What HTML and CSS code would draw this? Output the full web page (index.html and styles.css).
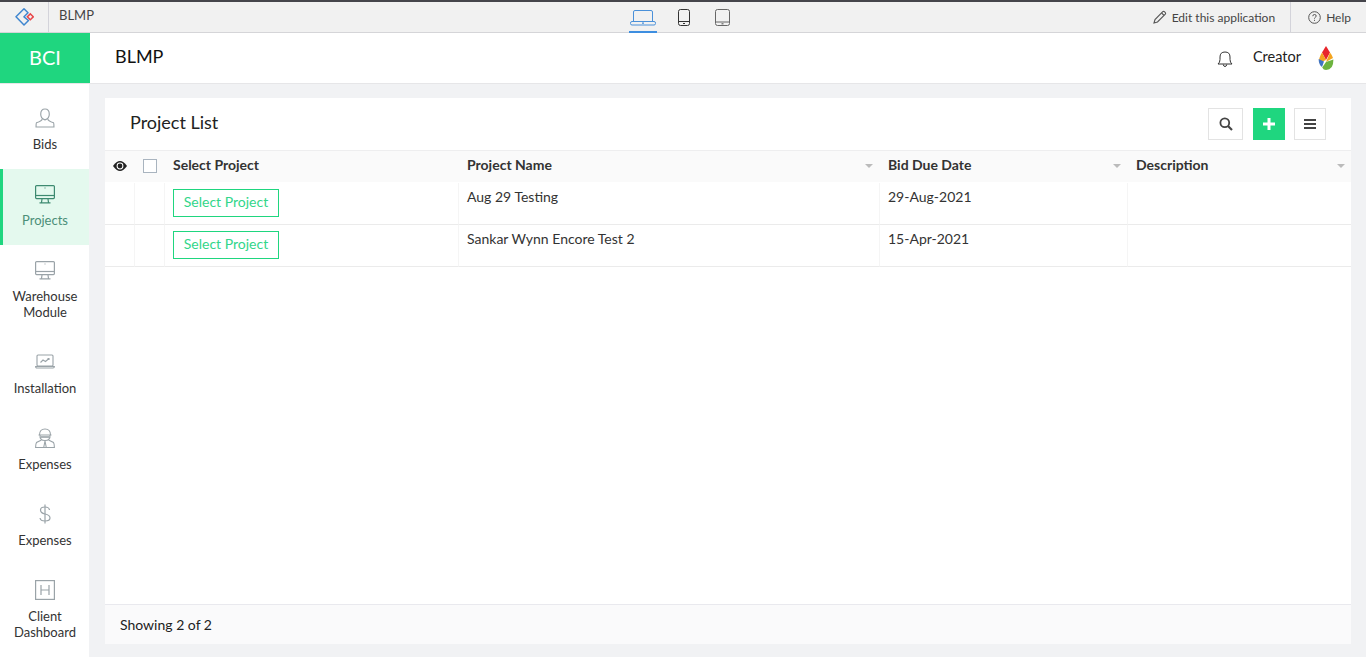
FILE: index.html
```html
<!DOCTYPE html>
<html lang="en">
<head>
    <meta charset="UTF-8">
    <meta name="viewport" content="width=device-width, initial-scale=1.0">
    <title>BLMP</title>
    <link rel="stylesheet" href="styles.css">
</head>
<body>
    <!-- Creator toolbar -->
    <div class="topbar">
        <div class="topbar-logo">
            <svg width="19" height="18" viewBox="0 0 19 18" fill="none">
                <path d="M9 0.8 L1 8.8 L9 17 L13.5 12.5 L9 8.8 L13 4.8 Z" stroke="#3f86cf" stroke-width="1.5" stroke-linejoin="round"/>
                <rect x="13.2" y="6.7" width="4.2" height="4.2" transform="rotate(45 15.3 8.8)" stroke="#e8464a" stroke-width="1.5"/>
            </svg>
        </div>
        <div class="topbar-app">BLMP</div>
        <div class="devices">
            <div class="device device-active">
                <svg width="26" height="16" viewBox="0 0 26 16" fill="none" stroke="#4a90d9" stroke-width="1">
                    <path d="M3.5 11.5 V2 Q3.5 0.5 5 0.5 H21 Q22.5 0.5 22.5 2 V11.5"/>
                    <rect x="0.5" y="11.5" width="25" height="3.5" rx="1.5"/>
                    <path d="M12 13.2 H14" stroke-width="1.2"/>
                </svg>
            </div>
            <div class="device">
                <svg width="12" height="17" viewBox="0 0 12 17" fill="none" stroke="#333" stroke-width="1">
                    <rect x="0.5" y="0.5" width="11" height="16" rx="2"/>
                    <path d="M1 12.5 H11"/>
                    <path d="M5 14.5 H7" stroke-width="1.2"/>
                </svg>
            </div>
            <div class="device device-tablet">
                <svg width="15" height="17" viewBox="0 0 15 17" fill="none" stroke="#666" stroke-width="1">
                    <rect x="0.5" y="0.5" width="14" height="16" rx="2"/>
                    <path d="M1 13 H14"/>
                    <path d="M6.5 14.8 H8.5" stroke-width="1.2"/>
                </svg>
            </div>
        </div>
        <div class="topbar-edit">
            <svg width="14" height="14" viewBox="0 0 14 14" fill="none" stroke="#555" stroke-width="1.1">
                <path d="M1 13 L2 9.5 L9.8 1.7 Q10.6 1 11.4 1.7 L12.3 2.6 Q13 3.4 12.3 4.2 L4.5 12 Z"/>
                <path d="M8.6 3 L11 5.4"/>
            </svg>
            Edit this application
        </div>
        <div class="topbar-help">
            <svg width="13" height="13" viewBox="0 0 13 13" fill="none" stroke="#555" stroke-width="1">
                <circle cx="6.5" cy="6.5" r="5.8"/>
                <path d="M4.8 5.2 Q4.8 3.5 6.5 3.5 Q8.2 3.5 8.2 5 Q8.2 5.9 7.2 6.4 Q6.5 6.8 6.5 7.6"/>
                <path d="M6.5 8.8 V9.9"/>
            </svg>
            Help
        </div>
    </div>

    <!-- App header -->
    <div class="header">
        <div class="brand">BCI</div>
        <div class="header-title">BLMP</div>
        <svg class="bell" width="16" height="18" viewBox="0 0 16 18" fill="none" stroke="#333" stroke-width="1">
            <path d="M1 14 Q3 12.5 3 9.5 V7 Q3 2 8 2 Q13 2 13 7 V9.5 Q13 12.5 15 14 Z"/>
            <path d="M6.3 14.5 Q6.5 16.5 8 16.5 Q9.5 16.5 9.7 14.5"/>
        </svg>
        <div class="header-user">Creator</div>
        <svg class="drop" width="16" height="24" viewBox="0 0 16 24">
            <path d="M8 0 L12 6.5 L8 14 L4 6.5 Z" fill="#e8262c"/>
            <path d="M12 6.5 Q14 9 15 12 L8 16 Z" fill="#f4a41f"/>
            <path d="M4 6.5 L8 14 L1 17 Q0.5 12 4 6.5 Z" fill="#f4a41f"/>
            <path d="M0.6 13 L6 15.5 L4 21 Q0.8 19 0.6 13 Z" fill="#3f74c4"/>
            <path d="M15.4 13.5 Q15.5 24 8 24 Q5.5 24 4.2 21.5 L8 16 Z" fill="#6cb33f"/>
        </svg>
    </div>

    <div class="layout">
        <!-- Side menu -->
        <div class="sidebar">
            <div class="nav-item">
                <svg width="20" height="20" viewBox="0 0 20 21" fill="none" stroke="#9aa3a8" stroke-width="1.2">
                    <path d="M10 1 Q14.5 1 14.5 6.5 Q14.5 11 10 12.5 Q5.5 11 5.5 6.5 Q5.5 1 10 1 Z"/>
                    <path d="M7 11.5 Q7 13.5 1 15.5 Q0.6 16 0.6 20 H19.4 Q19.4 16 19 15.5 Q13 13.5 13 11.5"/>
                </svg>
                <span>Bids</span>
            </div>
            <div class="nav-item nav-active">
                <svg width="20" height="20" viewBox="0 0 20 20" fill="none" stroke="#3d8a70" stroke-width="1.2">
                    <rect x="0.6" y="1.6" width="18.8" height="13" rx="1"/>
                    <path d="M1 11.5 H19"/>
                    <path d="M7 15 L6.5 18.5 M13 15 L13.5 18.5 M4.5 18.8 H15.5"/>
                    <path d="M9.5 4 H10.5"/>
                </svg>
                <span>Projects</span>
            </div>
            <div class="nav-item">
                <svg width="20" height="20" viewBox="0 0 20 20" fill="none" stroke="#9aa3a8" stroke-width="1.2">
                    <rect x="0.6" y="1.6" width="18.8" height="13" rx="1"/>
                    <path d="M1 11.5 H19"/>
                    <path d="M7 15 L6.5 18.5 M13 15 L13.5 18.5 M4.5 18.8 H15.5"/>
                    <path d="M9.5 4 H10.5"/>
                </svg>
                <span>Warehouse Module</span>
            </div>
            <div class="nav-item">
                <svg width="20" height="20" viewBox="0 0 20 20" fill="none" stroke="#9aa3a8" stroke-width="1.1">
                    <rect x="2" y="3" width="16" height="11" rx="1"/>
                    <path d="M0.6 14.5 H19.4 Q19.4 16 18 16 H2 Q0.6 16 0.6 14.5 Z"/>
                    <path d="M5.5 10.5 L8 8 L10.5 9.5 L14 6.5 M12.5 6.5 H14 V8"/>
                </svg>
                <span>Installation</span>
            </div>
            <div class="nav-item">
                <svg width="20" height="20" viewBox="0 0 20 20" fill="none" stroke="#9aa3a8" stroke-width="1.1">
                    <path d="M4.5 7 Q4.5 1 10 1 Q15.5 1 15.5 7"/>
                    <path d="M3.5 7 H16.5 M5 7 Q4.5 12.5 10 12.5 Q15.5 12.5 15 7"/>
                    <path d="M5.5 9 H14.5" stroke-width="1.6"/>
                    <path d="M6.5 12 L1.5 14.5 Q0.6 16 0.6 19.5 H19.4 Q19.4 16 18.5 14.5 L13.5 12"/>
                    <path d="M10 13 L8.8 19 M10 13 L11.2 19"/>
                </svg>
                <span>Expenses</span>
            </div>
            <div class="nav-item">
                <svg width="20" height="20" viewBox="0 0 20 20" fill="none" stroke="#9aa3a8" stroke-width="1.2">
                    <path d="M14.5 6 Q14 3 10 3 Q5.5 3 5.5 6 Q5.5 9 10 10 Q15 11 15 14 Q15 17 10 17 Q5.5 17 5 14"/>
                    <path d="M10 0.5 V19.5"/>
                </svg>
                <span>Expenses</span>
            </div>
            <div class="nav-item">
                <svg width="20" height="20" viewBox="0 0 20 20" fill="none" stroke="#9aa3a8" stroke-width="1.2">
                    <rect x="0.6" y="0.6" width="18.8" height="18.8"/>
                    <path d="M6 5 V15 M14 5 V15 M6 10 H14"/>
                </svg>
                <span>Client Dashboard</span>
            </div>
        </div>

        <div class="main">
            <div class="panel">
                <div class="panel-head">
                    <h1>Project List</h1>
                    <div class="tools">
                        <div class="tool-btn">
                            <svg width="14" height="14" viewBox="0 0 14 14" fill="none" stroke="#444" stroke-width="1.8">
                                <circle cx="5.8" cy="5.8" r="4.4"/>
                                <path d="M9 9 L13 13" stroke-width="2.2"/>
                            </svg>
                        </div>
                        <div class="tool-btn tool-add">
                            <svg width="12" height="12" viewBox="0 0 12 12" fill="#fff">
                                <path d="M4.5 0 H7.5 V4.5 H12 V7.5 H7.5 V12 H4.5 V7.5 H0 V4.5 H4.5 Z"/>
                            </svg>
                        </div>
                        <div class="tool-btn">
                            <svg width="12" height="10" viewBox="0 0 12 10" fill="#444">
                                <rect width="12" height="2"/>
                                <rect y="4" width="12" height="2"/>
                                <rect y="8" width="12" height="2"/>
                            </svg>
                        </div>
                    </div>
                </div>

                <table class="grid">
                    <colgroup>
                        <col class="col-eye">
                        <col class="col-check">
                        <col class="col-select">
                        <col class="col-name">
                        <col class="col-date">
                        <col>
                    </colgroup>
                    <thead>
                        <tr>
                            <th class="cell-icon">
                                <svg width="14" height="10" viewBox="0 0 14 10">
                                    <path d="M0 5 Q3.5 0 7 0 Q10.5 0 14 5 Q10.5 10 7 10 Q3.5 10 0 5 Z" fill="#222"/>
                                    <circle cx="7" cy="5" r="3.4" fill="#fff"/>
                                    <circle cx="7" cy="5" r="2.4" fill="#222"/>
                                </svg>
                            </th>
                            <th class="cell-icon"><span class="checkbox"></span></th>
                            <th>Select Project</th>
                            <th class="sortable">Project Name</th>
                            <th class="sortable">Bid Due Date</th>
                            <th class="sortable">Description</th>
                        </tr>
                    </thead>
                    <tbody>
                        <tr>
                            <td></td>
                            <td></td>
                            <td><a class="select-btn">Select Project</a></td>
                            <td>Aug 29 Testing</td>
                            <td>29-Aug-2021</td>
                            <td></td>
                        </tr>
                        <tr>
                            <td></td>
                            <td></td>
                            <td><a class="select-btn">Select Project</a></td>
                            <td>Sankar Wynn Encore Test 2</td>
                            <td>15-Apr-2021</td>
                            <td></td>
                        </tr>
                    </tbody>
                </table>

                <div class="panel-foot">Showing 2 of 2</div>
            </div>
        </div>
    </div>
</body>
</html>
```

FILE: styles.css
```css
* {
    box-sizing: border-box;
}

html, body {
    height: 100%;
}

body {
    margin: 0;
    height: 657px;
    overflow: hidden;
    display: flex;
    flex-direction: column;
    font-family: Lato, "Open Sans", sans-serif;
    font-size: 14px;
    color: #333;
    background-color: #f1f2f4;
}

/* top toolbar */
.topbar {
    position: relative;
    flex: none;
    height: 33px;
    display: flex;
    align-items: center;
    background-color: #f1f1f1;
    border-top: 2px solid #45454b;
    border-bottom: 1px solid #d5d5d8;
    font-size: 13px;
    color: #444;
}

.topbar-logo {
    width: 49px;
    height: 100%;
    padding-left: 15px;
    display: flex;
    align-items: center;
    border-right: 1px solid #d3d3da;
}

.topbar-app {
    margin-left: 10px;
    margin-bottom: 4px;
}

.devices {
    position: absolute;
    top: 0;
    bottom: -1px;
    left: 629px;
    display: flex;
    gap: 17px;
}

.device {
    width: 20px;
    display: flex;
    justify-content: center;
    align-items: center;
    padding-top: 2px;
    border-bottom: 2px solid transparent;
}

.device svg {
    display: block;
}

.device-active {
    width: 28px;
    border-bottom-color: #3d8ee0;
}

.device-tablet {
    width: 22px;
}

.topbar-edit {
    margin-left: auto;
    display: flex;
    align-items: center;
    gap: 5px;
    padding-right: 15px;
    height: 100%;
    border-right: 1px solid #d3d3da;
    font-size: 12px;
}

.topbar-help {
    display: flex;
    align-items: center;
    gap: 5px;
    padding: 0 15px 0 17px;
    font-size: 12px;
}

/* app header */
.header {
    flex: none;
    height: 51px;
    display: flex;
    align-items: center;
    background: #ffffff;
    border-bottom: 1px solid #e6e6e8;
}

.brand {
    width: 90px;
    height: 50px;
    line-height: 48px;
    text-align: center;
    background-color: #1fd67f;
    color: #ffffff;
    font-size: 20px;
}

.header-title {
    margin-left: 25px;
    margin-bottom: 4px;
    font-size: 18px;
    color: #111;
}

.bell {
    margin-left: auto;
    margin-top: 2px;
}

.header-user {
    margin-left: 20px;
    margin-bottom: 4px;
    font-size: 14.5px;
    color: #222;
}

.drop {
    margin-left: 17px;
    margin-right: 32px;
}

/* layout */
.layout {
    flex: 1;
    display: flex;
    min-height: 0;
}

.sidebar {
    flex: none;
    width: 89px;
    padding-top: 9px;
    background: #ffffff;
}

.nav-item {
    padding: 15px 7px 17px 8px;
    display: flex;
    flex-direction: column;
    align-items: center;
    text-align: center;
    font-size: 13px;
    line-height: 16px;
    color: #333;
}

.nav-item svg {
    display: block;
    margin-bottom: 8px;
}

.nav-item span {
    display: block;
}

.nav-active {
    background-color: #e4f9ee;
    border-left: 3px solid #1fd67f;
    color: #4b8f78;
    padding-left: 5px;
}

.main {
    flex: 1;
    padding: 14px 15px 13px 16px;
    min-width: 0;
}

.panel {
    height: 100%;
    display: flex;
    flex-direction: column;
    background: #ffffff;
}

.panel-head {
    flex: none;
    height: 53px;
    padding: 10px 25px 0;
    display: flex;
    justify-content: space-between;
    border-bottom: 1px solid #eeeeef;
}

.panel-head h1 {
    margin: 2px 0 0;
    font-size: 18px;
    line-height: 24px;
    font-weight: 400;
    color: #222;
}

.tools {
    display: flex;
    gap: 10px;
}

.tool-btn {
    width: 32px;
    height: 32px;
    display: flex;
    justify-content: center;
    align-items: center;
    border: 1px solid #e3e3e3;
}

.tool-btn:first-child {
    width: 35px;
}

.tool-add {
    background-color: #1fd67f;
    border-color: #1fd67f;
}

.tool-add + .tool-btn {
    margin-left: -1px;
}

/* project table */
.grid {
    flex: none;
    width: 100%;
    border-collapse: separate;
    border-spacing: 0;
    table-layout: fixed;
}

.col-eye {
    width: 29px;
}

.col-check {
    width: 30px;
}

.col-select {
    width: 294px;
}

.col-name {
    width: 421px;
}

.col-date {
    width: 248px;
}

.grid th {
    height: 32px;
    padding: 0 9px 4px;
    text-align: left;
    font-weight: 700;
    font-size: 14px;
    color: #333;
    background-color: #fafafa;
    border-bottom: 1px solid #ffffff;
}

.grid th.cell-icon {
    padding: 0 0 4px 1px;
    text-align: center;
}

.cell-icon svg {
    display: inline-block;
    vertical-align: middle;
}

.sortable {
    position: relative;
}

.sortable::after {
    content: "";
    position: absolute;
    right: 6px;
    top: 13px;
    border-left: 4px solid transparent;
    border-right: 4px solid transparent;
    border-top: 4px solid #bbbbbb;
}

.checkbox {
    display: inline-block;
    width: 14px;
    height: 14px;
    vertical-align: middle;
    background: #fff;
    border: 1px solid #a9b4bf;
}

.grid td {
    height: 42px;
    padding: 6px 8px 0;
    vertical-align: top;
    font-size: 14px;
    line-height: 16px;
    color: #333;
    border-left: 1px solid #f5f5f5;
    border-bottom: 1px solid #ebebeb;
}

.grid td:first-child {
    border-left: none;
}

.select-btn {
    display: block;
    width: 106px;
    height: 28px;
    line-height: 24px;
    text-align: center;
    color: #33d68a;
    border: 1px solid #1fd67f;
}

.panel-foot {
    margin-top: auto;
    flex: none;
    height: 40px;
    line-height: 39px;
    padding-left: 15px;
    font-size: 14px;
    color: #222;
    background-color: #fafafb;
    border-top: 1px solid #e9e9ee;
}
```
